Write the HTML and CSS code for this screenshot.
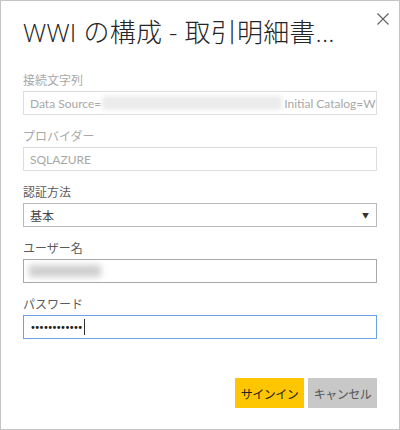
FILE: index.html
```html
<!DOCTYPE html>
<html lang="ja">
<head>
<meta charset="utf-8">
<link rel="stylesheet" href="styles.css">
</head>
<body>
<div class="dialog">
  <button class="close" aria-label="閉じる">
    <svg width="12" height="12" viewBox="0 0 12 12"><path d="M0.5 0.5 L11.5 11.5 M11.5 0.5 L0.5 11.5" stroke="#606060" stroke-width="1.1" fill="none"/></svg>
  </button>
  <h1 class="title">WWI の構成 - 取引明細書...</h1>
  <div class="field first">
    <div class="label disabled">接続文字列</div>
    <div class="input disabled">
      <span class="txt">Data Source=</span><span class="blur-long"></span><span class="txt">Initial Catalog=Wi</span>
    </div>
  </div>
  <div class="field">
    <div class="label disabled">プロバイダー</div>
    <div class="input disabled"><span class="txt">SQLAZURE</span></div>
  </div>
  <div class="field">
    <div class="label">認証方法</div>
    <div class="input select"><span class="txt dark">基本</span><span class="arrow">▼</span></div>
  </div>
  <div class="field">
    <div class="label">ユーザー名</div>
    <div class="input"><span class="blur-short"></span></div>
  </div>
  <div class="field">
    <div class="label">パスワード</div>
    <div class="input focus"><span class="dots">••••••••••••</span><span class="caret"></span></div>
  </div>
  <div class="actions">
    <button class="btn primary">サインイン</button>
    <button class="btn secondary">キャンセル</button>
  </div>
</div>
</body>
</html>
```

FILE: styles.css
```css
html, body {
  margin: 0;
  padding: 0;
  background: #ffffff;
}
.dialog {
  position: relative;
  width: 400px;
  height: 430px;
  box-sizing: border-box;
  border: 1px solid #c4c4c4;
  padding: 13px 22px 0 22px;
  font-family: "Noto Sans CJK JP", "Noto Sans", sans-serif;
  background: #fff;
}
.close {
  position: absolute;
  top: 11px;
  right: 9px;
  width: 14px;
  height: 14px;
  padding: 0;
  border: 0;
  background: transparent;
  display: flex;
  align-items: center;
  justify-content: center;
}
.title {
  margin: 0;
  font-size: 26px;
  line-height: 36px;
  font-weight: 300;
  color: #252525;
  font-family: "Open Sans", "Noto Sans CJK JP", sans-serif;
  letter-spacing: 0.2px;
  white-space: nowrap;
}
.field {
  display: flex;
  flex-direction: column;
  margin-top: 14px;
}
.field.first {
  margin-top: 23px;
}
.label {
  font-size: 12px;
  line-height: 14px;
  color: #5a5a5a;
  margin-bottom: 4px;
}
.label.disabled {
  color: #a8a8a8;
}
.input {
  height: 24px;
  box-sizing: border-box;
  border: 1px solid #a8a8a8;
  display: flex;
  align-items: center;
  padding: 0 6px;
  overflow: hidden;
  white-space: nowrap;
  font-family: "Lato", "Noto Sans CJK JP", sans-serif;
  font-size: 12px;
  color: #a8a8a8;
}
.input.disabled {
  border-color: #dedede;
}
.input.select {
  justify-content: space-between;
  border-color: #b8b8b8;
}
.input.focus {
  border-color: #6aa3e6;
}
.txt {
  flex: none;
}
.txt.dark {
  font-family: "Noto Sans CJK JP", sans-serif;
  font-size: 12px;
  color: #444;
}
.arrow {
  font-size: 7px;
  color: #333;
  margin-right: 1px;
}
.blur-long {
  display: inline-block;
  flex: none;
  width: 180px;
  height: 14px;
  background: #ececec;
  filter: blur(2px);
  margin: 0 2px 0 1px;
}
.blur-short {
  display: inline-block;
  width: 72px;
  height: 12px;
  background: #cfcfcf;
  filter: blur(3px);
  margin-left: -1px;
}
.dots {
  font-family: "DejaVu Sans", sans-serif;
  font-size: 10px;
  letter-spacing: -1.6px;
  color: #222;
}
.caret {
  display: inline-block;
  width: 1px;
  height: 16px;
  background: #333;
  margin-left: 2px;
}
.actions {
  display: flex;
  justify-content: flex-end;
  gap: 4px;
  margin-top: 39px;
}
.btn {
  width: 69px;
  height: 30px;
  border: 0;
  padding: 0;
  font-family: "Noto Sans CJK JP", sans-serif;
  font-size: 12px;
  letter-spacing: -0.5px;
}
.btn.primary {
  background: #fec600;
  color: #222;
}
.btn.secondary {
  background: #c8c8c8;
  color: #555;
}
```
